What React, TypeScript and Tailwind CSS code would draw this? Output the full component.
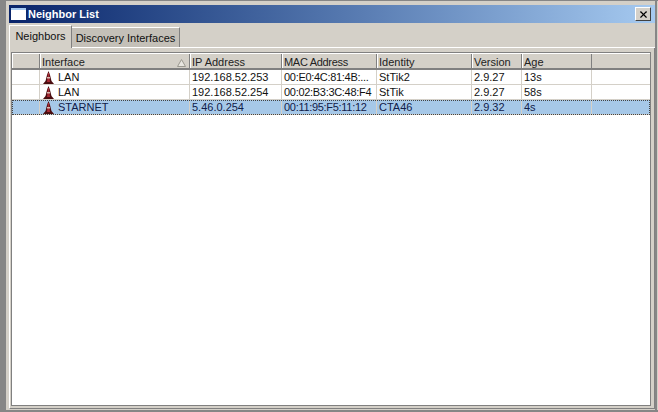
import { X } from 'lucide-react';

const columns = [
  { label: 'Interface', width: 'w-[150px]', tracking: '' },
  { label: 'IP Address', width: 'w-[92px]', tracking: '' },
  { label: 'MAC Address', width: 'w-[95px]', tracking: 'tracking-[-0.3px]' },
  { label: 'Identity', width: 'w-[95px]', tracking: '' },
  { label: 'Version', width: 'w-[50px]', tracking: '' },
  { label: 'Age', width: 'w-[70px]', tracking: '' },
];

const rows = [
  { iface: 'LAN', ip: '192.168.52.253', mac: '00:E0:4C:81:4B:...', identity: 'StTik2', version: '2.9.27', age: '13s', selected: false },
  { iface: 'LAN', ip: '192.168.52.254', mac: '00:02:B3:3C:48:F4', identity: 'StTik', version: '2.9.27', age: '58s', selected: false },
  { iface: 'STARNET', ip: '5.46.0.254', mac: '00:11:95:F5:11:12', identity: 'CTA46', version: '2.9.32', age: '4s', selected: true },
];

function ConeIcon() {
  return (
    <svg width="11" height="13" viewBox="0 0 11 13" className="shrink-0">
      <path d="M5.5 0 L7 4 L8.5 10 L11 13 L0 13 L2.5 10 L4 4 Z" fill="#4a0d10" />
      <path d="M5 2 L6 2 L7 11 L4 11 Z" fill="#a82a33" />
      <rect x="4" y="6" width="3" height="1.5" fill="#d8b8b0" />
    </svg>
  );
}

function SortArrow() {
  return (
    <svg width="9" height="8" viewBox="0 0 9 8" className="shrink-0">
      <path d="M4.5 0.5 L8.5 7.5 L0.5 7.5 Z" fill="#e8e6e0" stroke="#9a9890" strokeWidth="1" />
    </svg>
  );
}

export default function App() {
  return (
    <div className="w-[658px] h-[412px] overflow-hidden flex bg-[#868686] pl-[6px] pt-[1px] pb-[2px] font-['Liberation_Sans',sans-serif] text-[11px] text-[#111]">
      <div className="flex-1 h-full bg-[#d4d0c8] pl-[3px] pt-[4px] border-r-2 border-[#868686]">
        {/* Title bar */}
        <div className="h-[18px] flex items-center justify-between bg-gradient-to-r from-[#0a246a] to-[#a6caf0] pl-[2px] pr-[4px]">
          <div className="flex items-center gap-[2px]">
            <div className="w-[15px] h-[12px] bg-white border-t-2 border-[#a6caf0]" />
            <span className="text-white font-bold">Neighbor List</span>
          </div>
          <div className="w-[16px] h-[14px] bg-[#d4d0c8] border border-t-white border-l-white border-r-[#404040] border-b-[#404040] flex items-center justify-center">
            <X size={11} strokeWidth={2.5} className="text-black" />
          </div>
        </div>

        {/* Tabs */}
        <div className="flex items-end h-[25px] border-b border-white">
          <div className="h-[23px] w-[63px] pb-[2px] flex items-center justify-center bg-[#d4d0c8] border-t border-l border-white border-r border-r-[#808080] -mb-px">Neighbors</div>
          <div className="h-[20px] w-[108px] pt-[1px] flex items-center justify-center bg-[#c4c0b8] border-t border-white border-r border-r-[#808080]">Discovery Interfaces</div>
        </div>

        {/* Tab page */}
        <div className="h-[361px] pt-[4px] pl-[1px] pr-[3px] pb-[2px] border-l border-l-white border-r border-r-[#808080] border-b border-b-[#808080]">
          <div className="h-full bg-white border border-[#808080]">
            <div className="flex h-[17px] bg-[#d4d0c8] border-t border-t-white border-b-2 border-b-[#808080]">
              <div className="w-[28px] shrink-0 border-r border-[#808080] border-l border-l-white" />
              {columns.map((col) => (
                <div key={col.label} className={`${col.width} shrink-0 flex items-center justify-between pt-[3px] pl-[1px] pr-[3px] border-r border-[#808080] border-l border-l-white`}>
                  <span className={`text-[#222] ${col.tracking}`}>{col.label}</span>
                  {col.label === 'Interface' && <SortArrow />}
                </div>
              ))}
            </div>
            {rows.map((row) => (
              <div key={row.iface + row.ip} className={`flex h-[15px] items-center border-b border-[#d4d0c8] ${row.selected ? 'bg-[#a6c8e8] text-[#10204a] outline-1 outline-dotted outline-[#444] -outline-offset-1' : ''}`}>
                <div className="w-[28px] shrink-0 h-full border-r border-[#d4d0c8]" />
                <div className="w-[150px] shrink-0 h-full flex items-center gap-[4px] pl-[3px] border-r border-[#d4d0c8]">
                  <ConeIcon />
                  <span>{row.iface}</span>
                </div>
                <div className="w-[92px] shrink-0 h-full flex items-center pl-[2px] border-r border-[#d4d0c8]">{row.ip}</div>
                <div className="w-[95px] shrink-0 h-full flex items-center pl-[2px] tracking-[-0.3px] border-r border-[#d4d0c8]">{row.mac}</div>
                <div className="w-[95px] shrink-0 h-full flex items-center pl-[2px] border-r border-[#d4d0c8]">{row.identity}</div>
                <div className="w-[50px] shrink-0 h-full flex items-center pl-[2px] border-r border-[#d4d0c8]">{row.version}</div>
                <div className="w-[70px] shrink-0 h-full flex items-center pl-[2px] border-r border-[#d4d0c8]">{row.age}</div>
              </div>
            ))}
          </div>
        </div>
      </div>
      <div className="w-px h-full bg-[#d4d0c8]" />
    </div>
  );
}
